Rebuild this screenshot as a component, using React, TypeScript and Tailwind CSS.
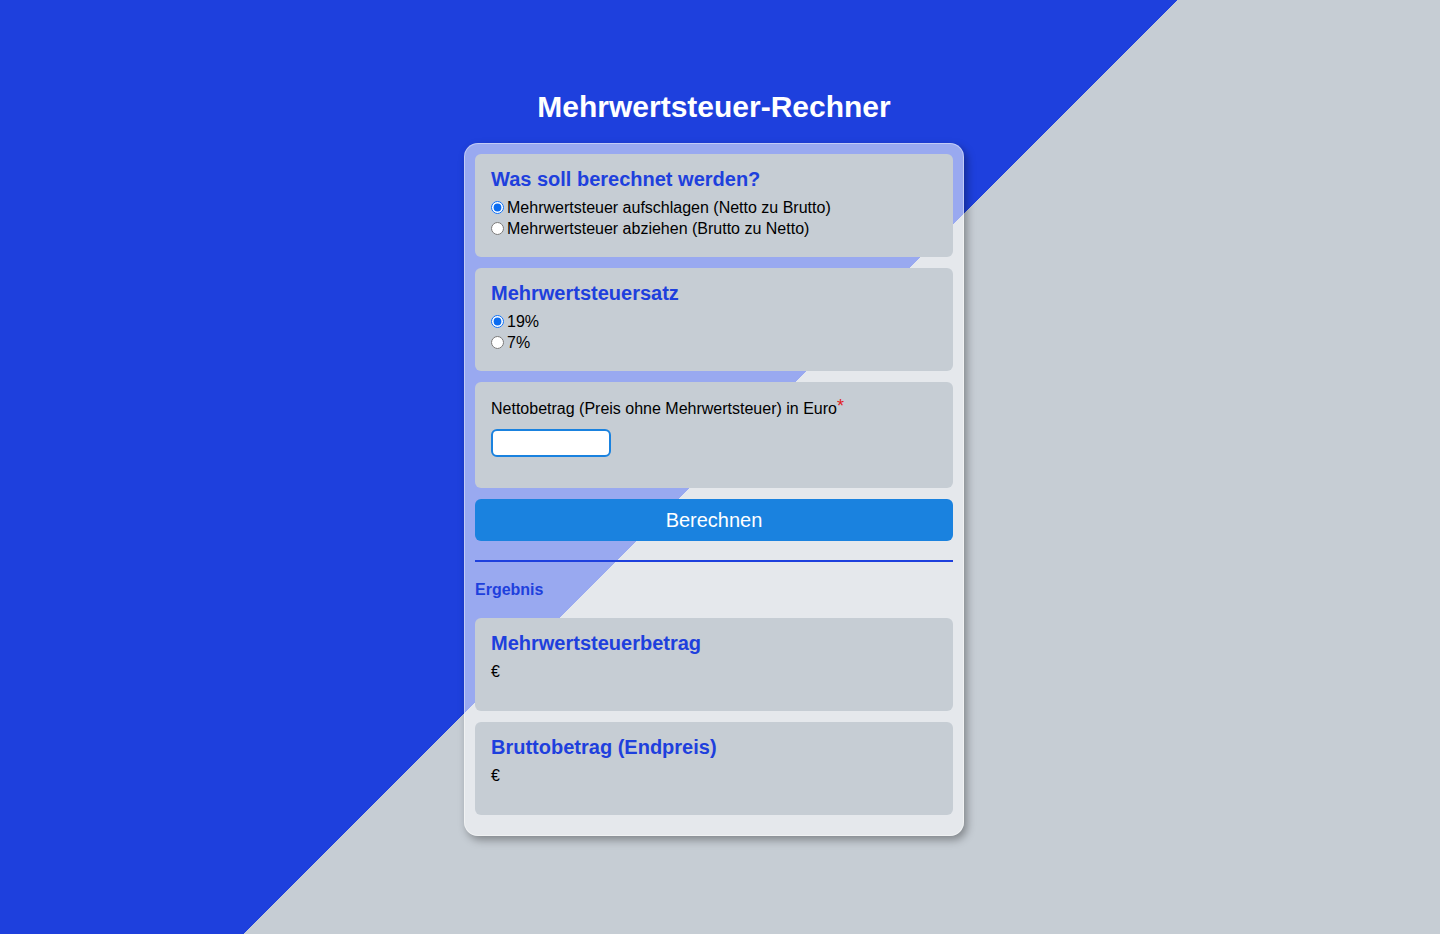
import React from 'react';

function Radio({ name, label, checked }: { name: string; label: string; checked?: boolean }) {
    return (
        <label className="flex items-center leading-[21px] text-[16px] text-black">
            <input
                type="radio"
                name={name}
                defaultChecked={checked}
                className="w-[13px] h-[13px] mr-[3px] accent-[#0b6cf0]"
            />
            {label}
        </label>
    );
}

function Box({ children, className = '' }: { children: React.ReactNode; className?: string }) {
    return <div className={`bg-[#c6cdd4] rounded-[6px] px-4 ${className}`}>{children}</div>;
}

function Heading({ children }: { children: React.ReactNode }) {
    return <h3 className="text-[20px] leading-[24px] font-bold text-[#1e40dd] mb-[6px]">{children}</h3>;
}

export default function App() {
    return (
        <div className="min-h-screen bg-[linear-gradient(135deg,#1e40dd_49.6%,#c6cdd4_49.6%)] font-['Liberation_Sans',Arial,sans-serif] pr-[12px] pt-[89px] pb-[98px]">
            <h1 className="text-center text-white font-bold text-[30px] leading-[36px] mb-[18px]">
                Mehrwertsteuer-Rechner
            </h1>

            <div className="mx-auto w-[500px] rounded-[14px] border border-white/40 bg-white/55 p-[10px] pb-[20px] shadow-[3px_4px_8px_rgba(0,0,0,0.35)]">
                <Box className="pt-[13px] pb-[18px]">
                    <Heading>Was soll berechnet werden?</Heading>
                    <Radio name="mode" label="Mehrwertsteuer aufschlagen (Netto zu Brutto)" checked />
                    <Radio name="mode" label="Mehrwertsteuer abziehen (Brutto zu Netto)" />
                </Box>

                <Box className="mt-[11px] pt-[13px] pb-[18px]">
                    <Heading>Mehrwertsteuersatz</Heading>
                    <Radio name="rate" label="19%" checked />
                    <Radio name="rate" label="7%" />
                </Box>

                <Box className="mt-[11px] pt-[17px] pb-[31px]">
                    <label className="block text-[16px] leading-[20px] text-black">
                        Nettobetrag (Preis ohne Mehrwertsteuer) in Euro
                        <span className="relative top-[-2px] leading-none text-[#e02020] text-[18px]">*</span>
                    </label>
                    <input
                        type="text"
                        className="block mt-[10px] w-[120px] h-[28px] rounded-[6px] border-2 border-[#1a82df] bg-white outline-none px-2"
                    />
                </Box>

                <button className="mt-[11px] w-full h-[42px] rounded-[6px] bg-[#1a82df] text-white text-[20px]">
                    Berechnen
                </button>

                <div className="mt-[19px] h-[2px] bg-[#1e40dd]" />

                <div className="mt-[18px] text-[16px] leading-[20px] font-bold text-[#1e40dd]">Ergebnis</div>

                <Box className="mt-[18px] pt-[13px] pb-[29px]">
                    <Heading>Mehrwertsteuerbetrag</Heading>
                    <div className="text-[16px] leading-[21px] text-black">€</div>
                </Box>

                <Box className="mt-[11px] pt-[13px] pb-[29px]">
                    <Heading>Bruttobetrag (Endpreis)</Heading>
                    <div className="text-[16px] leading-[21px] text-black">€</div>
                </Box>
            </div>
        </div>
    );
}
